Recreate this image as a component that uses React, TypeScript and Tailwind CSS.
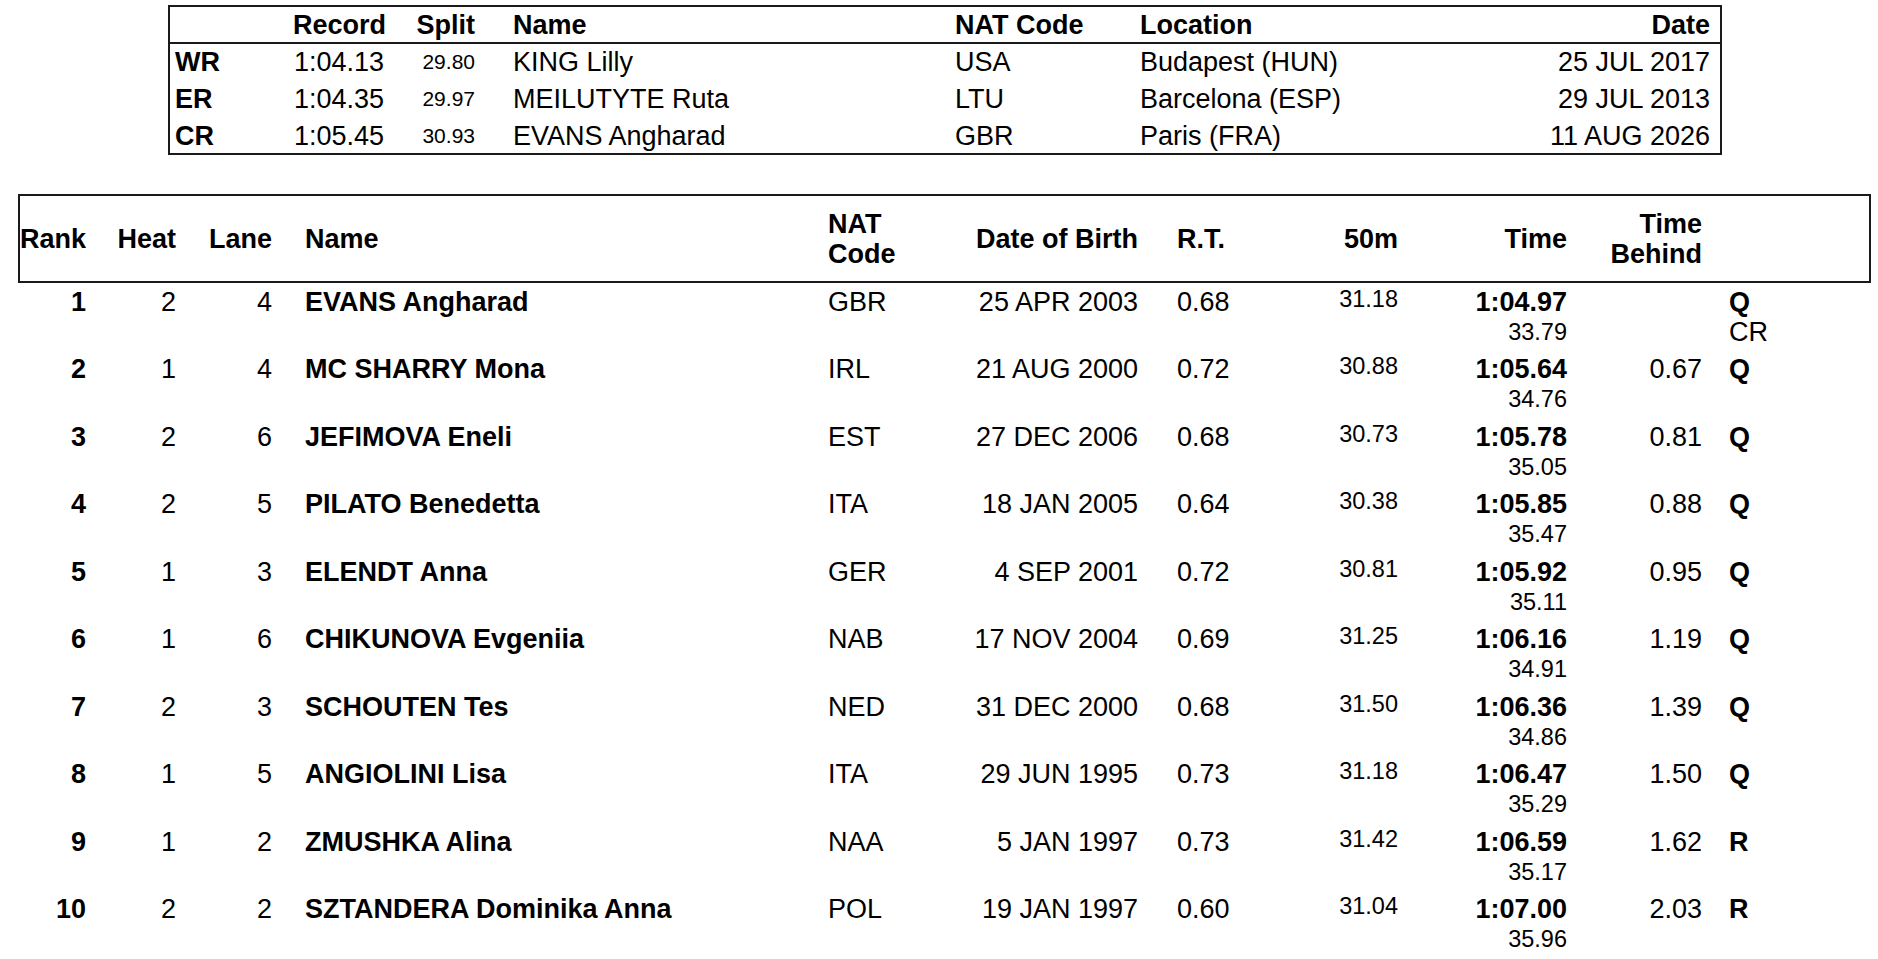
import React from "react";

type Row = {
  rank: string;
  heat: string;
  lane: string;
  name: string;
  nat: string;
  dob: string;
  rt: string;
  s50: string;
  time: string;
  split: string;
  behind: string;
  q: string;
  extra?: string;
};

const rows: Row[] = [
  { rank: "1", heat: "2", lane: "4", name: "EVANS Angharad", nat: "GBR", dob: "25 APR 2003", rt: "0.68", s50: "31.18", time: "1:04.97", split: "33.79", behind: "", q: "Q", extra: "CR" },
  { rank: "2", heat: "1", lane: "4", name: "MC SHARRY Mona", nat: "IRL", dob: "21 AUG 2000", rt: "0.72", s50: "30.88", time: "1:05.64", split: "34.76", behind: "0.67", q: "Q" },
  { rank: "3", heat: "2", lane: "6", name: "JEFIMOVA Eneli", nat: "EST", dob: "27 DEC 2006", rt: "0.68", s50: "30.73", time: "1:05.78", split: "35.05", behind: "0.81", q: "Q" },
  { rank: "4", heat: "2", lane: "5", name: "PILATO Benedetta", nat: "ITA", dob: "18 JAN 2005", rt: "0.64", s50: "30.38", time: "1:05.85", split: "35.47", behind: "0.88", q: "Q" },
  { rank: "5", heat: "1", lane: "3", name: "ELENDT Anna", nat: "GER", dob: "4 SEP 2001", rt: "0.72", s50: "30.81", time: "1:05.92", split: "35.11", behind: "0.95", q: "Q" },
  { rank: "6", heat: "1", lane: "6", name: "CHIKUNOVA Evgeniia", nat: "NAB", dob: "17 NOV 2004", rt: "0.69", s50: "31.25", time: "1:06.16", split: "34.91", behind: "1.19", q: "Q" },
  { rank: "7", heat: "2", lane: "3", name: "SCHOUTEN Tes", nat: "NED", dob: "31 DEC 2000", rt: "0.68", s50: "31.50", time: "1:06.36", split: "34.86", behind: "1.39", q: "Q" },
  { rank: "8", heat: "1", lane: "5", name: "ANGIOLINI Lisa", nat: "ITA", dob: "29 JUN 1995", rt: "0.73", s50: "31.18", time: "1:06.47", split: "35.29", behind: "1.50", q: "Q" },
  { rank: "9", heat: "1", lane: "2", name: "ZMUSHKA Alina", nat: "NAA", dob: "5 JAN 1997", rt: "0.73", s50: "31.42", time: "1:06.59", split: "35.17", behind: "1.62", q: "R" },
  { rank: "10", heat: "2", lane: "2", name: "SZTANDERA Dominika Anna", nat: "POL", dob: "19 JAN 1997", rt: "0.60", s50: "31.04", time: "1:07.00", split: "35.96", behind: "2.03", q: "R" },
];

const records = [
  { code: "WR", record: "1:04.13", split: "29.80", name: "KING Lilly", nat: "USA", loc: "Budapest (HUN)", date: "25 JUL 2017", h: "h-[37px]" },
  { code: "ER", record: "1:04.35", split: "29.97", name: "MEILUTYTE Ruta", nat: "LTU", loc: "Barcelona (ESP)", date: "29 JUL 2013", h: "h-[37px]" },
  { code: "CR", record: "1:05.45", split: "30.93", name: "EVANS Angharad", nat: "GBR", loc: "Paris (FRA)", date: "11 AUG 2026", h: "h-[35px]" },
];

function RecordsTable() {
  return (
    <div className="ml-[168px] mt-[5px] w-[1554px] border-2 border-[#1a1a1a] text-[27px] leading-[30px]">
      <div className="flex h-[37px] items-center border-b-2 border-[#1a1a1a] font-bold">
        <div className="w-[120px] pl-[5px]"></div>
        <div className="w-[120px] pl-[3px]">Record</div>
        <div className="w-[65px] text-right">Split</div>
        <div className="w-[480px] pl-[38px]">Name</div>
        <div className="w-[185px]">NAT Code</div>
        <div className="w-[360px]">Location</div>
        <div className="flex-1 pr-[10px] text-right">Date</div>
      </div>
      {records.map((r) => (
        <div key={r.code} className={`flex items-start pt-[3px] ${r.h}`}>
          <div className="w-[120px] pl-[5px] font-bold">{r.code}</div>
          <div className="w-[120px] pl-[4px]">{r.record}</div>
          <div className="w-[65px] text-right text-[21px]">{r.split}</div>
          <div className="w-[480px] pl-[38px]">{r.name}</div>
          <div className="w-[185px]">{r.nat}</div>
          <div className="w-[360px]">{r.loc}</div>
          <div className="flex-1 pr-[10px] text-right">{r.date}</div>
        </div>
      ))}
    </div>
  );
}

function ResultsHeader() {
  return (
    <div className="flex h-[89px] items-center border-2 border-[#1a1a1a] text-[27px] font-bold leading-[30px]">
      <div className="w-[66px] text-right">Rank</div>
      <div className="w-[90px] text-right">Heat</div>
      <div className="w-[96px] text-right">Lane</div>
      <div className="w-[556px] pl-[33px]">Name</div>
      <div className="w-[112px]">
        <div>NAT</div>
        <div>Code</div>
      </div>
      <div className="w-[198px] text-right">Date of Birth</div>
      <div className="w-[100px] pl-[39px]">R.T.</div>
      <div className="w-[160px] text-right">50m</div>
      <div className="w-[169px] text-right">Time</div>
      <div className="w-[135px] text-right">
        <div>Time</div>
        <div>Behind</div>
      </div>
      <div className="flex-1"></div>
    </div>
  );
}

function ResultRow({ r }: { r: Row }) {
  return (
    <div className="h-[67.5px] px-[2px] pt-[3.5px] text-[27px] leading-[30px]">
      <div className="flex h-[30px] items-start">
        <div className="w-[66px] text-right font-bold">{r.rank}</div>
        <div className="w-[90px] text-right">{r.heat}</div>
        <div className="w-[96px] text-right">{r.lane}</div>
        <div className="w-[556px] pl-[33px] font-bold">{r.name}</div>
        <div className="w-[112px]">{r.nat}</div>
        <div className="w-[198px] text-right">{r.dob}</div>
        <div className="w-[100px] pl-[39px]">{r.rt}</div>
        <div className="w-[160px] text-right text-[23.5px] leading-[25px]">{r.s50}</div>
        <div className="w-[169px] text-right font-bold">{r.time}</div>
        <div className="w-[135px] text-right">{r.behind}</div>
        <div className="flex-1 pl-[27px] font-bold">{r.q}</div>
      </div>
      <div className="flex h-[30px] items-center">
        <div className="w-[1378px]"></div>
        <div className="w-[169px] text-right text-[23.5px]">{r.split}</div>
        <div className="w-[135px]"></div>
        <div className="flex-1 pl-[27px]">{r.extra ?? ""}</div>
      </div>
    </div>
  );
}

export default function App() {
  return (
    <div className="h-[959px] w-[1878px] overflow-hidden bg-white font-['Liberation_Sans',Arial,sans-serif] text-black">
      <RecordsTable />
      <div className="ml-[18px] mt-[39px] w-[1853px]">
        <ResultsHeader />
        {rows.map((r) => (
          <ResultRow key={r.rank} r={r} />
        ))}
      </div>
    </div>
  );
}
